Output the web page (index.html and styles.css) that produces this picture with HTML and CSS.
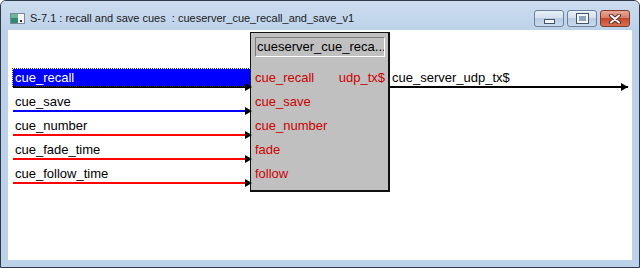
FILE: index.html
```html
<!DOCTYPE html>
<html lang="en">
<head>
    <meta charset="UTF-8">
    <title>S-7.1 : recall and save cues</title>
    <link rel="stylesheet" href="styles.css">
</head>
<body>
    <div class="window">
        <div class="titlebar">
            <svg class="app-icon" width="15" height="11" viewBox="0 0 15 11">
                <rect x="0.5" y="0.5" width="14" height="10" fill="#f4f6f8" stroke="#7c8894"/>
                <rect x="1" y="1" width="7" height="9" fill="#2f8a6e"/>
                <rect x="1" y="1" width="7" height="4" fill="#6bb59a"/>
                <rect x="10" y="7" width="2" height="2" fill="#303030"/>
            </svg>
            <span class="title">S-7.1 : recall and save cues&nbsp; : cueserver_cue_recall_and_save_v1</span>
            <div class="controls">
                <div class="ctl"><span class="glyph-min"></span></div>
                <div class="ctl"><span class="glyph-max"></span></div>
                <div class="ctl close">
                    <svg width="14" height="10" viewBox="0 0 14 10">
                        <path d="M3 1.5 L11 8.5 M11 1.5 L3 8.5" stroke="#5a2a22" stroke-width="4" stroke-linecap="round"/>
                        <path d="M3 1.5 L11 8.5 M11 1.5 L3 8.5" stroke="#ffffff" stroke-width="2" stroke-linecap="round"/>
                    </svg>
                </div>
            </div>
        </div>

        <div class="client">
            <!-- signals wired into the module -->
            <div class="inputs">
                <div class="wire black selected"><span class="label">cue_recall</span></div>
                <div class="wire blue"><span class="label">cue_save</span></div>
                <div class="wire red"><span class="label">cue_number</span></div>
                <div class="wire red"><span class="label">cue_fade_time</span></div>
                <div class="wire red"><span class="label">cue_follow_time</span></div>
            </div>

            <div class="block">
                <div class="block-name">cueserver_cue_reca...</div>
                <div class="ports">
                    <div class="port"><span>cue_recall</span><span>udp_tx$</span></div>
                    <div class="port"><span>cue_save</span></div>
                    <div class="port"><span>cue_number</span></div>
                    <div class="port"><span>fade</span></div>
                    <div class="port"><span>follow</span></div>
                </div>
            </div>

            <!-- signals coming out -->
            <div class="outputs">
                <div class="wire black"><span class="label">cue_server_udp_tx$</span></div>
            </div>
        </div>
    </div>
</body>
</html>
```

FILE: styles.css
```css
body {
    margin: 0;
    background: #ffffff;
    font-family: "Liberation Sans", Arial, sans-serif;
}

.window {
    width: 640px;
    height: 268px;
    box-sizing: border-box;
    border: 1px solid #2e3a48;
    border-radius: 6px 6px 0 0;
    background: #bcd2ea;
    display: flex;
    flex-direction: column;
}

.titlebar {
    height: 29px;
    flex-shrink: 0;
    display: flex;
    align-items: flex-start;
    padding: 0 9px;
    background: linear-gradient(#cddcee, #bcd2ea);
    border-radius: 5px 5px 0 0;
}

.app-icon {
    margin-top: 12px;
    margin-right: 5px;
}

.title {
    margin-top: 11px;
    font-size: 11px;
    line-height: 13px;
    color: #1b1b1b;
    white-space: nowrap;
}

.controls {
    margin-left: auto;
    margin-top: 9px;
    display: flex;
    gap: 3px;
}

.ctl {
    width: 30px;
    height: 17px;
    box-sizing: border-box;
    border: 1px solid #6c819c;
    border-radius: 3px;
    background: linear-gradient(#e9f0f8, #d3e0ee 45%, #b9cce2 50%, #c9daee);
    display: flex;
    align-items: center;
    justify-content: center;
}

.ctl.close {
    border-color: #7d3b2f;
    background: linear-gradient(#eaa99a, #d77c67 45%, #c4492e 50%, #d9714f);
}

.glyph-min {
    width: 9px;
    height: 3px;
    margin-top: 5px;
    background: #f4f7fb;
    border: 1px solid #42546c;
}

.glyph-max {
    width: 7px;
    height: 5px;
    border: 2px solid #f4f7fb;
    outline: 1px solid #42546c;
    background: #8ea3bd;
}

.client {
    flex: 1;
    margin: 0 7px 7px 7px;
    background: #ffffff;
    display: flex;
    align-items: flex-start;
    padding-left: 5px;
    font-size: 13px;
}

.inputs {
    width: 237px;
    margin-top: 34px;
}

.outputs {
    width: 238px;
    margin-top: 34px;
}

.wire {
    position: relative;
    height: 24px;
    box-sizing: border-box;
    border-bottom: 2px solid #000000;
    display: flex;
    align-items: flex-end;
    padding: 0 0 1px 2px;
    line-height: 15px;
    color: #000000;
    white-space: nowrap;
}

.wire::after {
    content: "";
    position: absolute;
    right: -2px;
    bottom: -5px;
    border-left: 7px solid #000000;
    border-top: 4px solid transparent;
    border-bottom: 4px solid transparent;
}

.outputs .wire::after {
    right: 0;
}

.wire.blue {
    border-bottom-color: #0000ff;
}

.wire.red {
    border-bottom-color: #ff0000;
}

.wire.selected {
    padding: 0;
}

.wire.selected .label {
    flex: 1;
    height: 17px;
    line-height: 17px;
    box-sizing: border-box;
    padding-left: 2px;
    background: #0000ff;
    color: #ffffff;
    outline: 1px dotted #303030;
}

.block {
    width: 140px;
    height: 160px;
    margin-top: 2px;
    box-sizing: border-box;
    background: #c0c0c0;
    border: 1px solid #111111;
    border-right-width: 2px;
    border-bottom-width: 2px;
    padding: 4px 3px 0 4px;
}

.block-name {
    height: 20px;
    box-sizing: border-box;
    border: 1px solid #ffffff;
    border-top-color: #7a7a7a;
    border-left-color: #7a7a7a;
    padding-left: 1px;
    line-height: 18px;
    color: #000000;
    white-space: nowrap;
    overflow: hidden;
}

.ports {
    margin-top: 9px;
}

.port {
    height: 24px;
    line-height: 24px;
    display: flex;
    justify-content: space-between;
    color: #cc0000;
}
```
